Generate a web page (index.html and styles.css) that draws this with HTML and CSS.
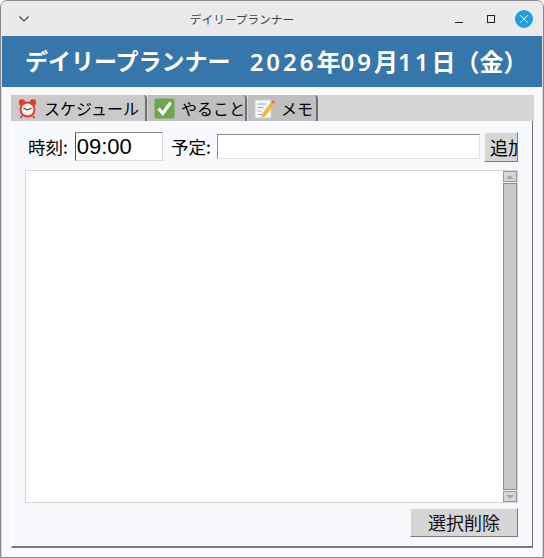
FILE: index.html
```html
<!DOCTYPE html>
<html lang="ja">
<head>
<meta charset="utf-8">
<title>デイリープランナー</title>
<link rel="stylesheet" href="styles.css">
</head>
<body>
<div class="window">
  <div class="titlebar">
    <svg class="chev" width="12" height="8" viewBox="0 0 12 8"><path d="M1.5 1.5 6 6l4.5-4.5" fill="none" stroke="#444" stroke-width="1.1"/></svg>
    <div class="wintitle">デイリープランナー</div>
    <div class="winbtns">
      <svg width="10" height="10" viewBox="0 0 10 10"><path d="M1 8.500h8" stroke="#222" stroke-width="1"/></svg>
      <svg class="maxbtn" width="10" height="10" viewBox="0 0 10 10"><rect x="1.500" y="1.500" width="7" height="7" fill="none" stroke="#222" stroke-width="1"/></svg>
      <svg width="18" height="18" viewBox="0 0 18 18"><circle cx="9" cy="9" r="9" fill="#1f9fe0"/><path d="M5.300 5.300l7.400 7.400M12.700 5.300l-7.400 7.400" stroke="#fff" stroke-width="1"/></svg>
    </div>
  </div>
  <div class="header">
    <span class="app">デイリープランナー</span>
    <span class="date"><b>2026</b>年<b>09</b>月<b>11</b>日（金）</span>
  </div>
  <div class="notebook">
    <div class="tabs">
      <div class="tab tab-active">
        <svg class="emoji" width="21" height="21" viewBox="0 0 21 21">
          <circle cx="5" cy="4.500" r="3.200" fill="#e23b33"/><circle cx="16" cy="4.500" r="3.200" fill="#e23b33"/>
          <path d="M5 18l-1.500 2M16 18l1.500 2" stroke="#c9302a" stroke-width="1.600"/>
          <circle cx="10.500" cy="11.500" r="8" fill="#e23b33"/><circle cx="10.500" cy="11.500" r="6" fill="#fbf3ea"/>
          <path d="M10.500 12 6.500 10M10.500 12l4-2" stroke="#444" stroke-width="1.100"/>
        </svg>
        <span>スケジュール</span>
      </div>
      <div class="tab">
        <svg class="emoji" width="21" height="21" viewBox="0 0 21 21">
          <rect x="0.500" y="0.500" width="20" height="20" rx="2.500" fill="#6aa84a"/>
          <path d="M4.500 10.500l4.200 5 8-11" fill="none" stroke="#fff" stroke-width="3.200"/>
        </svg>
        <span>やること</span>
      </div>
      <div class="tab tab-memo">
        <svg class="emoji" width="21" height="21" viewBox="0 0 21 21">
          <rect x="1" y="2" width="16" height="18" fill="#f4f8fb" stroke="#b9d2e4"/>
          <path d="M3.500 6h9M3.500 9.500h6M3.500 13h4M3.500 16.500h6" stroke="#8fb4d0" stroke-width="1"/>
          <path d="M8 16 17 4l3 2.400-9 12-3.600 1z" fill="#f5b52e"/>
          <path d="M17 4l1.500-2 3 2.400-1.500 2z" fill="#ee6d6d"/>
        </svg>
        <span>メモ</span>
      </div>
    </div>
    <div class="panel">
      <div class="form">
        <span class="label">時刻:</span>
        <div class="time">09:00</div>
        <span class="label label-plan">予定:</span>
        <div class="plan"></div>
        <div class="btn btn-add"><span>追加</span></div>
      </div>
      <div class="listrow">
        <div class="list"></div>
        <div class="scrollbar">
          <div class="sb-btn"><i class="arrow-up"></i></div>
          <div class="sb-thumb"></div>
          <div class="sb-btn"><i class="arrow-down"></i></div>
        </div>
      </div>
      <div class="actions"><div class="btn btn-del">選択削除</div></div>
    </div>
  </div>
</div>
</body>
</html>
```
FILE: styles.css
```css
* { box-sizing: border-box; }
html, body { margin: 0; padding: 0; }
body {
  width: 544px;
  height: 558px;
  overflow: hidden;
  background: #fff;
  font-family: "Noto Sans CJK JP", "Noto Sans", sans-serif;
  color: #111;
}
.window {
  width: 544px;
  height: 558px;
  display: flex;
  flex-direction: column;
  background: #f8f9fd;
  border: 1px solid #8a8a8a;
  border-radius: 7px 7px 0 0;
  overflow: hidden;
  box-shadow: inset 1px 0 0 #d8d8d8, inset -1px 0 0 #d8d8d8;
}
.titlebar {
  height: 35px;
  flex: none;
  background: #eaeaed;
  display: flex;
  align-items: center;
  position: relative;
  padding: 0 10px 0 17px;
  justify-content: space-between;
}
.wintitle {
  position: absolute;
  left: 0;
  right: 0;
  text-align: center;
  font-size: 11.700px;
  color: #444;
  padding-right: 60px;
}
.winbtns {
  display: flex;
  align-items: center;
  gap: 22px;
  position: relative;
}
.maxbtn { margin-right: -3px; }
.header {
  flex: none;
  height: 51px;
  margin: 0 1px;
  background: #3776ab;
  color: #fff;
  font-size: 23px;
  font-weight: 700;
  line-height: 49px;
  padding-left: 23px;
  white-space: nowrap;
  display: flex;
  gap: 19px;
}
.date { font-size: 24px; }
.date b {
  font-family: "Noto Sans", sans-serif;
  font-weight: 600;
  letter-spacing: 3px;
}
.notebook {
  flex: 1;
  display: flex;
  flex-direction: column;
  margin: 8px 9px 9px 10px;
  min-height: 0;
}
.tabs {
  flex: none;
  height: 26px;
  background: #d6d6d6;
  display: flex;
  align-items: flex-end;
  gap: 1px;
}
.tab {
  width: 99px;
  height: 26px;
  display: flex;
  align-items: center;
  gap: 6px;
  padding: 0 2px 0 6px;
  background: #bfbfbf;
  border-right: 2px solid #6f6f6f;
  border-radius: 0 4px 0 0;
  font-size: 16px;
  color: #000;
  white-space: nowrap;
}
.tab-active { width: 136px; background: #cacaca; }
.tab-memo { width: 70px; }
.emoji { flex: none; }
.panel {
  flex: 1;
  min-height: 0;
  display: flex;
  flex-direction: column;
  border-left: 1px solid #ffffff;
  border-right: 1px solid #6f6f6f;
  border-bottom: 2px solid #7a7a7a;
  padding: 11px 14px 9px 13px;
  margin-right: 1px;
}
.form {
  display: flex;
  align-items: center;
  height: 29px;
  flex: none;
  color: #000;
}
.label {
  font-size: 17.500px;
  margin-left: 3px;
  width: 47px;
}
.label-plan { margin-left: 8px; width: 46px; }
.time {
  width: 89px;
  height: 29px;
  background: #fff;
  border: 1px solid #d9d9d9;
  border-left-color: #555;
  border-top-color: #888;
  font-size: 22px;
  line-height: 27px;
  padding-left: 1px;
  font-family: "Liberation Sans", sans-serif;
}
.plan {
  width: 265px;
  height: 25px;
  background: #fff;
  border: 1px solid #e3e3e3;
  border-left-color: #8a8a8a;
  border-top-color: #8a8a8a;
}
.btn {
  background: #d6d6d6;
  border-right: 1px solid #7c7c7c;
  border-bottom: 1px solid #7c7c7c;
  border-top: 1px solid #f4f4f4;
  border-left: 1px solid #f4f4f4;
  font-size: 18px;
}
.btn-add {
  flex: none;
  width: 34px;
  height: 30px;
  margin-left: 4px;
  overflow: hidden;
  padding: 2px 0 0 5px;
  white-space: nowrap;
  line-height: 24px;
}
.listrow {
  flex: 1;
  min-height: 0;
  display: flex;
  margin-top: 9px;
  border: 1px solid #d6d6d6;
  background: #fff;
}
.list { flex: 1; background: #fff; }
.scrollbar {
  width: 14px;
  display: flex;
  flex-direction: column;
  background: #f0f0f0;
}
.sb-btn {
  height: 11px;
  flex: none;
  background: #d6d6d6;
  border: 1px solid #9a9a9a;
  display: flex;
  align-items: center;
  justify-content: center;
}
.sb-thumb {
  flex: 1;
  background: #c9c9c9;
  border: 1px solid #8e8e8e;
  margin: 1px 0;
}
.arrow-up, .arrow-down {
  display: block;
  width: 0;
  height: 0;
  border-left: 4px solid transparent;
  border-right: 4px solid transparent;
}
.arrow-up { border-bottom: 4px solid #a8a8a8; }
.arrow-down { border-top: 4px solid #a8a8a8; }
.actions {
  flex: none;
  display: flex;
  justify-content: flex-end;
  margin-top: 5px;
}
.btn-del {
  width: 108px;
  height: 29px;
  text-align: center;
  line-height: 26px;
}
```
